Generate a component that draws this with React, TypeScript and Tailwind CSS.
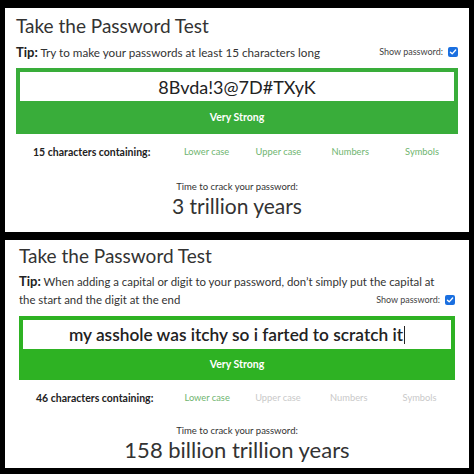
import { ReactNode } from 'react'

// Small native-looking checked checkbox
function CheckBox() {
  return (
    <span className="inline-flex h-[10px] w-[10px] items-center justify-center rounded-[2px] bg-[#1a6fe0]">
      <svg viewBox="0 0 10 10" className="h-[8px] w-[8px]">
        <path d="M1.8 5.2 L4 7.3 L8.3 2.6" fill="none" stroke="#fff" strokeWidth="1.7" strokeLinecap="round" strokeLinejoin="round" />
      </svg>
    </span>
  )
}

function ShowPassword() {
  return (
    <label className="flex items-center gap-[5px] text-[9px] leading-[14px] text-[#444]">
      Show password:
      <CheckBox />
    </label>
  )
}

const KINDS = ['Lower case', 'Upper case', 'Numbers', 'Symbols']

interface PanelProps {
  tip: ReactNode
  password: string
  passwordClass: string
  count: number
  has: boolean[]
  crack: string
  crackClass: string
  timeClass: string
  green: string
  padClass: string
  caret?: boolean
}

function Panel({ tip, password, passwordClass, count, has, crack, crackClass, timeClass, green, padClass, caret }: PanelProps) {
  return (
    <section className={`flex flex-col bg-white text-[#333] ${padClass}`}>
      <h1 className="text-[19px] leading-[26px] font-normal">Take the Password Test</h1>

      {tip}

      {/* strength box */}
      <div className={`mt-[7px] flex flex-col px-[4px] pt-[4px] ${green}`}>
        <div className="flex h-[29px] items-center justify-center bg-white">
          <span className={`text-[#222] ${passwordClass}`}>
            {password}
            {caret && <span className="ml-px inline-block h-[18px] w-px translate-y-[3px] bg-[#222]" />}
          </span>
        </div>
        <div className="flex flex-1 items-center justify-center text-[10.5px] font-bold text-white">Very Strong</div>
      </div>

      {/* character classes */}
      <div className="mt-[10px] flex h-[16px] items-center">
        <span className="ml-[17px] w-[138px] text-[10.5px] leading-[16px] font-bold text-[#222]">
          {count} characters containing:
        </span>
        {KINDS.map((k, i) => (
          <span
            key={k}
            className={`w-[72px] text-center text-[9.3px] leading-[16px] ${has[i] ? 'text-[#6fb56f]' : 'text-[#c9c9c9]'}`}
          >
            {k}
          </span>
        ))}
      </div>

      <div className={`text-center text-[9.5px] leading-[12px] text-[#333] ${timeClass}`}>Time to crack your password:</div>
      <div className={`mt-[2px] text-center leading-[22px] text-[#333] ${crackClass}`}>{crack}</div>
    </section>
  )
}

export default function App() {
  return (
    <div className="flex h-[474px] w-[474px] flex-col gap-[8px] bg-black px-[5px] pt-[8px] font-['Lato',sans-serif]">
      <Panel
        padClass="h-[224px] pl-[11px] pr-[11px] pt-[5px]"
        green="h-[66px] bg-[#39ad3a]"
        password="8Bvda!3@7D#TXyK"
        passwordClass="text-[18px] leading-[22px]"
        count={15}
        has={[true, true, true, true]}
        timeClass="mt-[21px]"
        crack="3 trillion years"
        crackClass="text-[21px]"
        tip={
          <div className="mt-[4px] flex h-[18px] items-center justify-between">
            <p className="text-[11.7px] leading-[18px] text-[#333]">
              <span className="text-[13px] leading-none font-bold text-[#222]">Tip:</span> Try to make your passwords at
              least 15 characters long
            </p>
            <ShowPassword />
          </div>
        }
      />
      <Panel
        padClass="h-[228px] pl-[14px] pr-[14px] pt-[3px]"
        green="h-[64px] bg-[#2eb223]"
        password="my asshole was itchy so i farted to scratch it"
        passwordClass="text-[17.3px] leading-[22px] font-semibold"
        caret
        count={46}
        has={[true, false, false, false]}
        timeClass="mt-[19px]"
        crack="158 billion trillion years"
        crackClass="text-[22px]"
        tip={
          <div className="mt-[4px] flex flex-col text-[11.4px] leading-[18px] text-[#333]">
            <p>
              <span className="text-[13px] leading-none font-bold text-[#222]">Tip:</span> When adding a capital or digit to
              your password, don’t simply put the capital at
            </p>
            <div className="flex items-center justify-between">
              <span>the start and the digit at the end</span>
              <ShowPassword />
            </div>
          </div>
        }
      />
    </div>
  )
}
